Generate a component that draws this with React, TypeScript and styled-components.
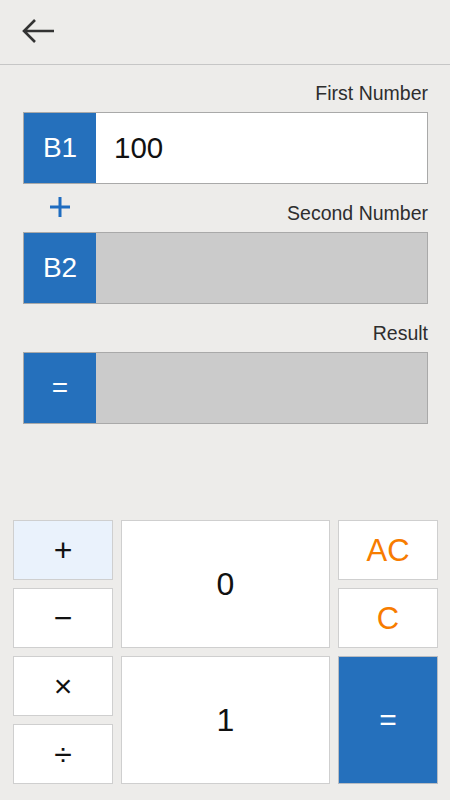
import React from "react";
import styled, { createGlobalStyle } from "styled-components";

const FONT = `"Liberation Sans", Arial, sans-serif`;

const Global = createGlobalStyle`
  html, body { margin: 0; padding: 0; background: #edecea; }
  body { font-family: ${FONT}; }
  * { box-sizing: border-box; }
`;

const Page = styled.div`
  width: 450px;
  height: 800px;
  background: #edecea;
  display: flex;
  flex-direction: column;
  overflow: hidden;
  font-family: ${FONT};
`;

const Header = styled.header`
  height: 65px;
  border-bottom: 1px solid #c6c6c6;
  display: flex;
  align-items: center;
  padding-left: 21px;
  flex-shrink: 0;
`;

const BackButton = styled.button`
  width: 36px;
  height: 30px;
  border: none;
  background: transparent;
  padding: 0;
  display: flex;
  align-items: center;
  justify-content: center;
  margin-top: -2px;
`;

const Form = styled.section`
  padding: 15px 22px 0 23px;
  display: flex;
  flex-direction: column;
`;

const LabelRow = styled.div<{ $h: number }>`
  height: ${(p) => p.$h}px;
  display: flex;
  align-items: flex-end;
  justify-content: space-between;
  padding-bottom: 8px;
`;

const Label = styled.span`
  margin-left: auto;
  font-size: 19.5px;
  color: #2e2e2e;
  line-height: 21px;
`;

const Field = styled.div<{ $filled?: boolean }>`
  height: 72px;
  display: flex;
  border: 1px solid #a9a9a9;
  background: ${(p) => (p.$filled ? "#ffffff" : "#cbcbcb")};
`;

const Tag = styled.div`
  width: 72px;
  background: #2570bc;
  color: #fff;
  font-size: 28px;
  display: flex;
  align-items: center;
  justify-content: center;
  flex-shrink: 0;
`;

const Value = styled.div`
  flex: 1;
  display: flex;
  align-items: center;
  padding-left: 18px;
  font-size: 29.5px;
  color: #111;
`;

const OpMark = styled.div`
  width: 20px;
  height: 20px;
  margin-left: 27px;
  margin-top: 13px;
  align-self: flex-start;
`;

const Spacer = styled.div`
  flex: 1;
`;

const Keypad = styled.div`
  display: grid;
  grid-template-columns: 100px 1fr 100px;
  grid-template-rows: repeat(4, 60px);
  gap: 8px;
  padding: 0 12px 16px 13px;
`;

type Tone = "sel" | "accent" | "primary" | "digit" | "op";

const sizes: Record<Tone, string> = {
  sel: "32px",
  op: "32px",
  digit: "32px",
  accent: "31px",
  primary: "30px",
};

const Key = styled.button<{ $tone: Tone; $span?: boolean }>`
  grid-row: ${(p) => (p.$span ? "span 2" : "auto")};
  border: 1px solid ${(p) => (p.$tone === "primary" ? "#b8bcc2" : "#cfcfcf")};
  background: ${(p) =>
    p.$tone === "sel" ? "#eaf2fc" : p.$tone === "primary" ? "#2570bc" : "#ffffff"};
  color: ${(p) =>
    p.$tone === "accent" ? "#f77c00" : p.$tone === "primary" ? "#ffffff" : "#111111"};
  font-family: ${FONT};
  font-size: ${(p) => sizes[p.$tone]};
  line-height: 1;
  padding: 0;
  display: flex;
  align-items: center;
  justify-content: center;
`;

const BackArrow = () => (
  <svg width="34" height="26" viewBox="0 0 34 26" fill="none">
    <path d="M32 13H3M13 2L2 13l11 11" stroke="#333" strokeWidth="2.6" />
  </svg>
);

const PlusMark = () => (
  <svg width="20" height="20" viewBox="0 0 20 20">
    <path d="M10 0v20M0 10h20" stroke="#1f6cc0" strokeWidth="3" />
  </svg>
);

export default function App() {
  return (
    <Page>
      <Global />
      <Header>
        <BackButton aria-label="Back">
          <BackArrow />
        </BackButton>
      </Header>
      <Form>
        <LabelRow $h={32}>
          <Label>First Number</Label>
        </LabelRow>
        <Field $filled>
          <Tag>B1</Tag>
          <Value>100</Value>
        </Field>
        <LabelRow $h={48}>
          <OpMark>
            <PlusMark />
          </OpMark>
          <Label>Second Number</Label>
        </LabelRow>
        <Field>
          <Tag>B2</Tag>
          <Value />
        </Field>
        <LabelRow $h={48}>
          <Label>Result</Label>
        </LabelRow>
        <Field>
          <Tag>=</Tag>
          <Value />
        </Field>
      </Form>
      <Spacer />
      <Keypad>
        <Key $tone="sel">+</Key>
        <Key $tone="digit" $span>0</Key>
        <Key $tone="accent">AC</Key>
        <Key $tone="op">−</Key>
        <Key $tone="accent">C</Key>
        <Key $tone="op">×</Key>
        <Key $tone="digit" $span>1</Key>
        <Key $tone="primary" $span>=</Key>
        <Key $tone="op">÷</Key>
      </Keypad>
    </Page>
  );
}
